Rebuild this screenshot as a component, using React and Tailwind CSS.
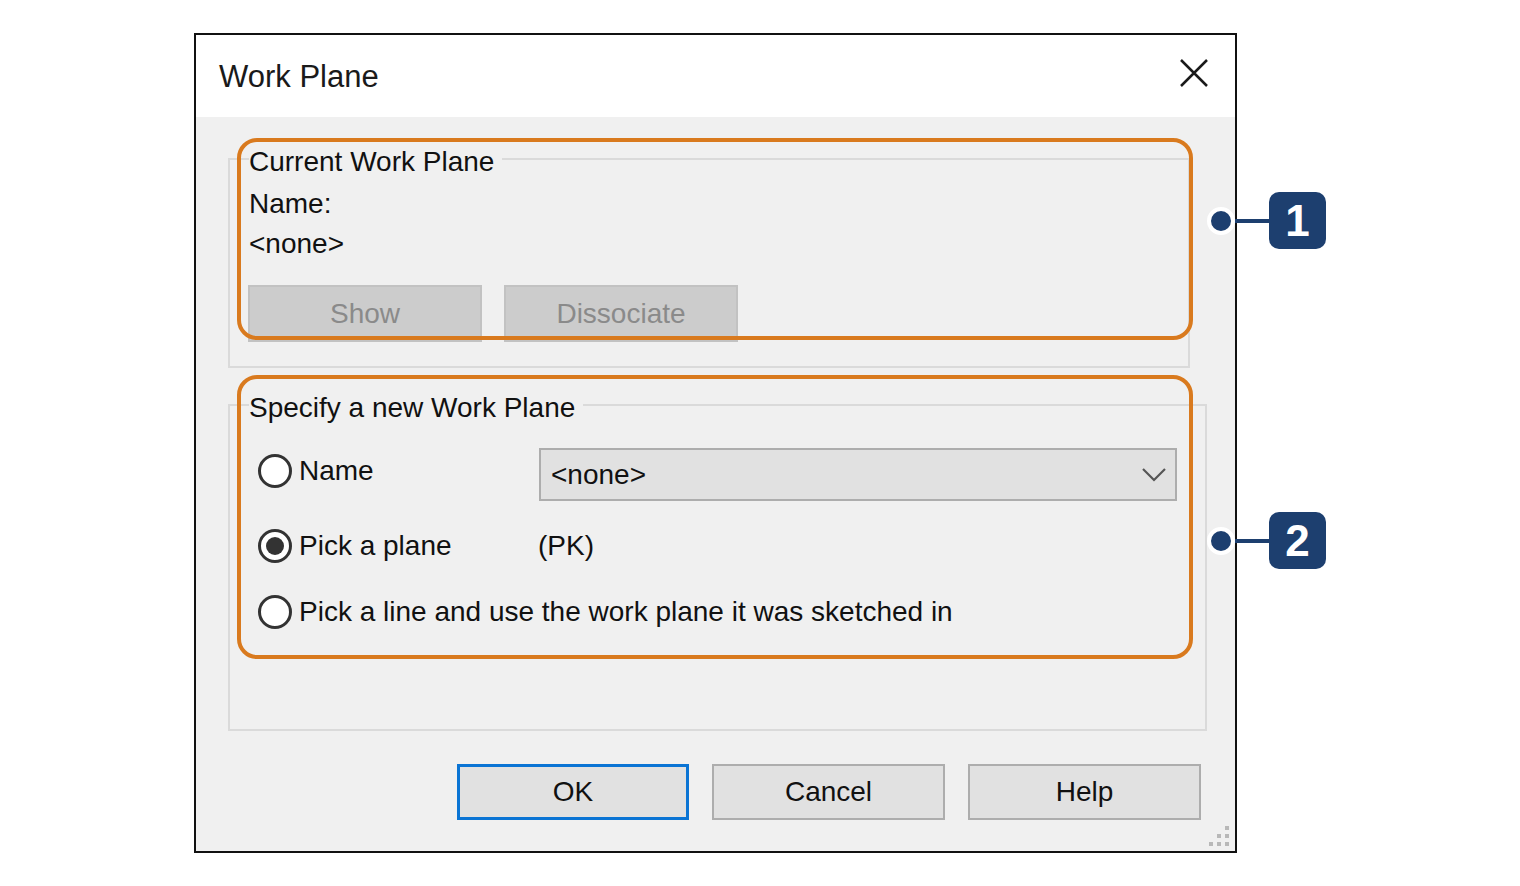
import React from "react";

const FONT = { fontFamily: '"Liberation Sans", Arial, sans-serif' };

function Radio({ checked }) {
  return (
    <span className="flex h-[34px] w-[34px] shrink-0 items-center justify-center rounded-full border-[3px] border-[#333333] bg-white">
      {checked && <span className="h-[18px] w-[18px] rounded-full bg-[#333333]" />}
    </span>
  );
}

function Callout({ top, label }) {
  return (
    <div className="absolute left-[1207px] flex items-center" style={{ top }}>
      <span className="h-[28px] w-[28px] rounded-full border-[4px] border-white bg-[#1d3f6f]" />
      <span className="h-[4px] w-[34px] bg-[#1d3f6f]" />
      <span className="flex h-[57px] w-[57px] items-center justify-center rounded-[10px] bg-[#1d3f6f] text-[44px] font-bold leading-none text-white">
        {label}
      </span>
    </div>
  );
}

export default function App() {
  return (
    <div className="relative h-[886px] w-[1520px] overflow-hidden bg-white text-[#111111]" style={FONT}>
      <div className="pl-[194px] pt-[33px]">
        <div className="relative flex h-[820px] w-[1043px] flex-col border-2 border-[#111111] bg-[#f0f0f0]">
          {/* Title bar */}
          <div className="flex h-[82px] items-center justify-between bg-white pl-[23px] pr-[27px]">
            <span className="text-[31px] leading-none text-[#1a1a1a]">Work Plane</span>
            <svg width="28" height="28" viewBox="0 0 28 28" className="-mt-[6px]">
              <path d="M1 1 L27 27 M27 1 L1 27" stroke="#1a1a1a" strokeWidth="2.5" fill="none" />
            </svg>
          </div>

          {/* Body */}
          <div className="flex flex-col pl-[32px] pt-[25px] text-[28px]">
            <fieldset className="w-[962px] border-2 border-[#dadada] pb-[24px] pl-[19px] pt-[8px]">
              <legend className="relative top-[3px] pr-[8px] leading-[34px]">Current Work Plane</legend>
              <div className="leading-[40px]">Name:</div>
              <div className="leading-[40px]">&lt;none&gt;</div>
              <div className="mt-[21px] flex gap-[22px] -ml-[1px]">
                <div className="flex h-[57px] w-[234px] items-center justify-center border-2 border-[#c2c2c2] bg-[#cccccc] text-[#8a8a8a]">
                  Show
                </div>
                <div className="flex h-[57px] w-[234px] items-center justify-center border-2 border-[#c2c2c2] bg-[#cccccc] text-[#8a8a8a]">
                  Dissociate
                </div>
              </div>
            </fieldset>

            <fieldset className="mt-[20px] w-[979px] border-2 border-[#dadada] pb-[91px] pl-[19px] pr-[28px] pt-[26px]">
              <legend className="relative top-[3px] pr-[8px] leading-[34px]">Specify a new Work Plane</legend>
              <div className="ml-[9px] flex flex-col">
                <div className="flex h-[53px] items-center">
                  <div className="flex w-[281px] items-center gap-[7px] -mt-[7px]">
                    <Radio />
                    <span>Name</span>
                  </div>
                  <div className="flex h-[53px] flex-1 items-center justify-between border-2 border-[#adadad] bg-[#e1e1e1] pl-[10px] pr-[9px]">
                    <span>&lt;none&gt;</span>
                    <svg width="24" height="14" viewBox="0 0 24 14">
                      <path d="M1 1 L12 12 L23 1" stroke="#555555" strokeWidth="2.2" fill="none" />
                    </svg>
                  </div>
                </div>
                <div className="mt-[18px] flex h-[53px] items-center">
                  <div className="flex w-[280px] items-center gap-[7px]">
                    <Radio checked />
                    <span>Pick a plane</span>
                  </div>
                  <span>(PK)</span>
                </div>
                <div className="mt-[13px] flex h-[53px] items-center gap-[7px]">
                  <Radio />
                  <span>Pick a line and use the work plane it was sketched in</span>
                </div>
              </div>
            </fieldset>

            <div className="mt-[33px] flex justify-end gap-[23px] pr-[34px]">
              <div className="flex h-[56px] w-[232px] items-center justify-center border-[3px] border-[#0a74d4] bg-[#e1e1e1]">
                OK
              </div>
              <div className="flex h-[56px] w-[233px] items-center justify-center border-2 border-[#adadad] bg-[#e1e1e1]">
                Cancel
              </div>
              <div className="flex h-[56px] w-[233px] items-center justify-center border-2 border-[#adadad] bg-[#e1e1e1]">
                Help
              </div>
            </div>
          </div>

          {/* Resize grip */}
          <svg width="22" height="22" viewBox="0 0 22 22" className="absolute bottom-[4px] right-[5px]">
            <g fill="#b8b8b8">
              <rect x="17" y="1" width="4" height="4" />
              <rect x="9" y="9" width="4" height="4" />
              <rect x="17" y="9" width="4" height="4" />
              <rect x="1" y="17" width="4" height="4" />
              <rect x="9" y="17" width="4" height="4" />
              <rect x="17" y="17" width="4" height="4" />
            </g>
          </svg>
        </div>
      </div>

      {/* Highlight frames */}
      <div className="absolute left-[237px] top-[138px] h-[202px] w-[956px] rounded-[20px] border-[4px] border-[#d97a1e]" />
      <div className="absolute left-[237px] top-[375px] h-[284px] w-[956px] rounded-[20px] border-[4px] border-[#d97a1e]" />

      {/* Numbered callouts */}
      <Callout top="192px" label="1" />
      <Callout top="512px" label="2" />
    </div>
  );
}
